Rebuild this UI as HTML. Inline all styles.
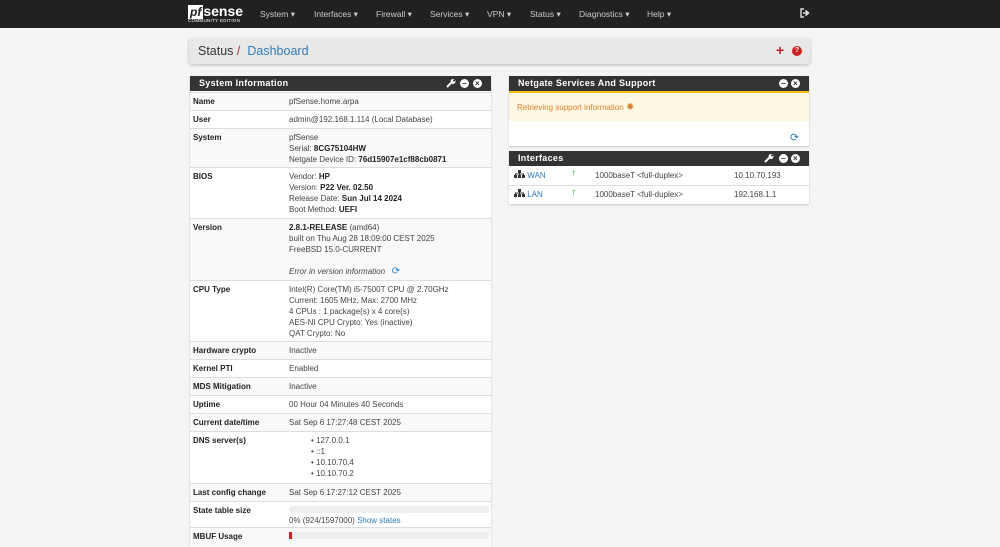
<!DOCTYPE html>
<html><head><meta charset="utf-8"><style>
*{box-sizing:border-box;margin:0;padding:0}
body{width:1000px;height:536px;overflow:hidden;background:#f5f5f5;font-family:"Liberation Sans",sans-serif;font-size:8px;color:#333;position:relative}
.nav{position:absolute;left:0;top:0;width:1000px;height:28px;background:#212121}
.nav .m{position:absolute;top:9px;color:#ccc;font-size:8.5px}
.logo{position:absolute;left:188px;top:3px;color:#fff}
.crumb{position:absolute;left:189px;top:38px;width:621px;height:26px;background:#e8e8e8;border-radius:3px;box-shadow:0 1px 3px rgba(0,0,0,.25);font-size:12.5px;padding:6px 9px}
.panel{position:absolute;background:#fff;box-shadow:0 1px 2px rgba(0,0,0,.2)}
.hd{height:15px;background:#333;color:#fff;font-weight:bold;font-size:9px;padding:2px 9px;letter-spacing:.3px;position:relative}
.ic{position:absolute;top:3px;width:9px;height:9px;border-radius:50%;background:#fff;color:#333;font-size:8px;line-height:9px;text-align:center;font-weight:bold}
.row{position:absolute;left:0;width:301px;border-top:1px solid #ddd;line-height:11px}
.row .k{position:absolute;left:3px;top:3px;font-weight:bold;color:#222}
.row .v{position:absolute;left:99px;top:3px;color:#444}
.s{background:#f9f9f9}
b{color:#222}
a{color:#337ab7;text-decoration:none}
.w{position:absolute;top:3px}
</style></head><body>
<div class="nav">
<div class="logo"><span style="display:inline-block;background:#fff;color:#212121;font-weight:bold;font-style:italic;font-size:12px;padding:0 2px;line-height:14px">pf</span><span style="font-weight:bold;font-size:14px">sense</span><div style="font-size:4.5px;letter-spacing:.3px;margin-top:-1px">COMMUNITY EDITION</div></div>
<span class="m" style="left:260px">System ▾</span>
<span class="m" style="left:314px">Interfaces ▾</span>
<span class="m" style="left:376px">Firewall ▾</span>
<span class="m" style="left:430px">Services ▾</span>
<span class="m" style="left:487px">VPN ▾</span>
<span class="m" style="left:530px">Status ▾</span>
<span class="m" style="left:579px">Diagnostics ▾</span>
<span class="m" style="left:647px">Help ▾</span>
<svg style="position:absolute;left:800px;top:8px" width="10" height="10" viewBox="0 0 10 10"><path d="M4 1H1v8h3" fill="none" stroke="#ddd" stroke-width="1.4"/><path d="M3 5h4M5.5 2.5L8.5 5 5.5 7.5" fill="none" stroke="#ddd" stroke-width="1.6"/></svg>
</div>
<div class="crumb">Status <span style="color:#b33">/</span> <span style="color:#337ab7">&nbsp;Dashboard</span>
<span style="position:absolute;left:587px;top:4px;color:#b22;font-size:14px;font-weight:bold">+</span>
<span style="position:absolute;left:603px;top:8px;width:10px;height:10px;border-radius:50%;background:#c22;color:#fff;font-size:7px;text-align:center;line-height:10px;font-weight:bold">?</span></div>

<div class="panel" style="left:190px;top:76px;width:301px;height:470px">
<div class="hd">System Information<svg class="w" style="left:256px" width="10" height="9" viewBox="0 0 10 9"><path d="M1 8L5 4" stroke="#fff" stroke-width="2"/><circle cx="7" cy="2.5" r="2.5" fill="#fff"/><circle cx="8" cy="1.5" r="1" fill="#333"/></svg><span class="ic" style="left:270px">−</span><span class="ic" style="left:283px">×</span></div>
<div class="row s" style="top:16px;height:18px"><span class="k">Name</span><span class="v">pfSense.home.arpa</span></div>
<div class="row" style="top:34px;height:18px"><span class="k">User</span><span class="v">admin@192.168.1.114 (Local Database)</span></div>
<div class="row s" style="top:52px;height:39px"><span class="k">System</span><span class="v">pfSense<br>Serial: <b>8CG75104HW</b><br>Netgate Device ID: <b>76d15907e1cf88cb0871</b></span></div>
<div class="row" style="top:91px;height:51px"><span class="k">BIOS</span><span class="v">Vendor: <b>HP</b><br>Version: <b>P22 Ver. 02.50</b><br>Release Date: <b>Sun Jul 14 2024</b><br>Boot Method: <b>UEFI</b></span></div>
<div class="row s" style="top:142px;height:62px"><span class="k">Version</span><span class="v"><b>2.8.1-RELEASE</b> (amd64)<br>built on Thu Aug 28 18:09:00 CEST 2025<br>FreeBSD 15.0-CURRENT<br><br><i>Error in version information</i> &nbsp; <span style="color:#337ab7;font-size:10px">⟳</span></span></div>
<div class="row" style="top:204px;height:61px"><span class="k">CPU Type</span><span class="v">Intel(R) Core(TM) i5-7500T CPU @ 2.70GHz<br>Current: 1605 MHz, Max: 2700 MHz<br>4 CPUs : 1 package(s) x 4 core(s)<br>AES-NI CPU Crypto: Yes (inactive)<br>QAT Crypto: No</span></div>
<div class="row s" style="top:265px;height:18px"><span class="k">Hardware crypto</span><span class="v">Inactive</span></div>
<div class="row" style="top:283px;height:18px"><span class="k">Kernel PTI</span><span class="v">Enabled</span></div>
<div class="row s" style="top:301px;height:18px"><span class="k">MDS Mitigation</span><span class="v">Inactive</span></div>
<div class="row" style="top:319px;height:18px"><span class="k">Uptime</span><span class="v">00 Hour 04 Minutes 40 Seconds</span></div>
<div class="row s" style="top:337px;height:18px"><span class="k">Current date/time</span><span class="v">Sat Sep 6 17:27:48 CEST 2025</span></div>
<div class="row" style="top:355px;height:52px"><span class="k">DNS server(s)</span><span class="v" style="left:121px">• 127.0.0.1<br>• ::1<br>• 10.10.70.4<br>• 10.10.70.2</span></div>
<div class="row s" style="top:407px;height:18px"><span class="k">Last config change</span><span class="v">Sat Sep 6 17:27:12 CEST 2025</span></div>
<div class="row" style="top:425px;height:26px"><span class="k">State table size</span><div style="position:absolute;left:99px;top:4px;width:200px;height:7px;background:#eee;border-radius:3px"></div><span class="v" style="top:13px">0% (924/1597000) <a>Show states</a></span></div>
<div class="row s" style="top:451px;height:20px"><span class="k">MBUF Usage</span><div style="position:absolute;left:99px;top:4px;width:200px;height:7px;background:#eee;border-radius:3px"><div style="width:3px;height:7px;background:#c22"></div></div></div>
</div>

<div class="panel" style="left:509px;top:76px;width:300px;height:70px">
<div class="hd">Netgate Services And Support<span class="ic" style="left:270px">−</span><span class="ic" style="left:282px">×</span></div>
<div style="height:30px;background:#fcf8e3;border-top:2px solid #f0c419;color:#e0812f;padding:9px 8px">Retrieving support information <span style="color:#e0812f;font-size:10px">✹</span></div>
<span style="position:absolute;left:281px;top:55px;color:#337ab7;font-size:11px">⟳</span>
</div>

<div class="panel" style="left:509px;top:151px;width:300px;height:53px">
<div class="hd">Interfaces<svg class="w" style="left:255px" width="10" height="9" viewBox="0 0 10 9"><path d="M1 8L5 4" stroke="#fff" stroke-width="2"/><circle cx="7" cy="2.5" r="2.5" fill="#fff"/><circle cx="8" cy="1.5" r="1" fill="#333"/></svg><span class="ic" style="left:270px">−</span><span class="ic" style="left:282px">×</span></div>
<div class="row" style="top:16px;height:18px;width:300px;border-top:none"><span class="v" style="left:5px"><svg width="11" height="8" viewBox="0 0 11 8"><rect x="4" y="0" width="3" height="3" fill="#333"/><path d="M1.5 6V4h8v2M5.5 3v3" stroke="#333" fill="none"/><rect x="0" y="5" width="3" height="3" fill="#333"/><rect x="4" y="5" width="3" height="3" fill="#333"/><rect x="8" y="5" width="3" height="3" fill="#333"/></svg> <a>WAN</a></span><span class="v" style="left:62px;color:#3a3;font-weight:bold;font-size:10px;top:1px">↑</span><span class="v" style="left:86px">1000baseT &lt;full-duplex&gt;</span><span class="v" style="left:225px">10.10.70.193</span></div>
<div class="row" style="top:34px;height:18px;width:300px"><span class="v" style="left:5px"><svg width="11" height="8" viewBox="0 0 11 8"><rect x="4" y="0" width="3" height="3" fill="#333"/><path d="M1.5 6V4h8v2M5.5 3v3" stroke="#333" fill="none"/><rect x="0" y="5" width="3" height="3" fill="#333"/><rect x="4" y="5" width="3" height="3" fill="#333"/><rect x="8" y="5" width="3" height="3" fill="#333"/></svg> <a>LAN</a></span><span class="v" style="left:62px;color:#3a3;font-weight:bold;font-size:10px;top:1px">↑</span><span class="v" style="left:86px">1000baseT &lt;full-duplex&gt;</span><span class="v" style="left:225px">192.168.1.1</span></div>
</div>
</body></html>
